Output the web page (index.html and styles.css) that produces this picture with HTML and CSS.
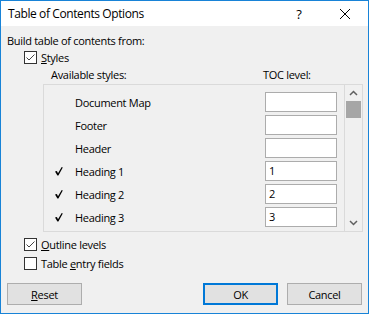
FILE: index.html
```html
<!DOCTYPE html>
<html>
<head>
<meta charset="utf-8">
<link rel="stylesheet" href="styles.css">
</head>
<body>
<div class="window">
  <div class="titlebar">
    <span class="title">Table of Contents Options</span>
    <span class="tbtn help">?</span>
    <span class="tbtn close"><svg width="10" height="10" viewBox="0 0 10 10"><path d="M0 0 L10 10 M10 0 L0 10" stroke="#000" stroke-width="1" fill="none"/></svg></span>
  </div>
  <div class="content">
    <div class="heading">Build table of contents from:</div>
    <div class="check-row">
      <span class="checkbox"><svg width="11" height="11" viewBox="0 0 11 11"><path d="M1.5 5.5 L4 8 L9.5 2.5" stroke="#444" stroke-width="1" fill="none"/></svg></span>
      <span class="label"><u>S</u>tyles</span>
    </div>
    <div class="cols-head">
      <span class="col-styles">Available styles:</span>
      <span class="col-level">TOC level:</span>
    </div>
    <div class="listbox">
      <div class="rows">
        <div class="row"><span class="mark"></span><span class="name">Document Map</span><span class="level"></span></div>
        <div class="row"><span class="mark"></span><span class="name">Footer</span><span class="level"></span></div>
        <div class="row"><span class="mark"></span><span class="name">Header</span><span class="level"></span></div>
        <div class="row"><span class="mark"><svg width="8" height="9" viewBox="0 0 8 9"><path d="M0 4.6 L1.9 3.9 L3 6.2 L6.7 0 L7.8 0.6 L3.4 8.6 L2.4 8.6 Z" fill="#000"/></svg></span><span class="name">Heading 1</span><span class="level">1</span></div>
        <div class="row"><span class="mark"><svg width="8" height="9" viewBox="0 0 8 9"><path d="M0 4.6 L1.9 3.9 L3 6.2 L6.7 0 L7.8 0.6 L3.4 8.6 L2.4 8.6 Z" fill="#000"/></svg></span><span class="name">Heading 2</span><span class="level">2</span></div>
        <div class="row"><span class="mark"><svg width="8" height="9" viewBox="0 0 8 9"><path d="M0 4.6 L1.9 3.9 L3 6.2 L6.7 0 L7.8 0.6 L3.4 8.6 L2.4 8.6 Z" fill="#000"/></svg></span><span class="name">Heading 3</span><span class="level">3</span></div>
      </div>
      <div class="scrollbar">
        <span class="arrow"><svg width="9" height="6" viewBox="0 0 9 6"><path d="M1 5 L4.5 1.5 L8 5" stroke="#606060" stroke-width="1.5" fill="none"/></svg></span>
        <span class="thumb"></span>
        <span class="track"></span>
        <span class="arrow"><svg width="9" height="6" viewBox="0 0 9 6"><path d="M1 1 L4.5 4.5 L8 1" stroke="#606060" stroke-width="1.5" fill="none"/></svg></span>
      </div>
    </div>
    <div class="check-row outline-row">
      <span class="checkbox"><svg width="11" height="11" viewBox="0 0 11 11"><path d="M1.5 5.5 L4 8 L9.5 2.5" stroke="#444" stroke-width="1" fill="none"/></svg></span>
      <span class="label"><u>O</u>utline levels</span>
    </div>
    <div class="check-row entry-row">
      <span class="checkbox"></span>
      <span class="label">Table <u>e</u>ntry fields</span>
    </div>
    <div class="buttons">
      <span class="btn"><u>R</u>eset</span>
      <span class="spacer"></span>
      <span class="btn default">OK</span>
      <span class="btn">Cancel</span>
    </div>
  </div>
</div>
</body>
</html>
```
FILE: styles.css
```css
* { box-sizing: border-box; }
html, body { margin: 0; padding: 0; }
body {
  font-family: "Open Sans", "Noto Sans", sans-serif;
  font-size: 11px;
  letter-spacing: -0.3px;
  color: #000;
  background: #f0f0f0;
}
.window {
  width: 369px;
  height: 314px;
  border: 1px solid #1883d7;
  background: #f0f0f0;
  display: flex;
  flex-direction: column;
}
.titlebar {
  height: 25px;
  background: #fff;
  display: flex;
  align-items: center;
  flex: none;
}
.title {
  flex: 1;
  padding-left: 7px;
  font-size: 12px;
  letter-spacing: -0.4px;
}
.tbtn {
  width: 46px;
  height: 25px;
  display: flex;
  align-items: center;
  justify-content: center;
}
.help { font-size: 13px; }
.content {
  flex: 1;
  display: flex;
  flex-direction: column;
}
.heading {
  margin: 7px 0 0 6px;
  line-height: 15px;
  height: 15px;
}
.check-row {
  display: flex;
  align-items: center;
  height: 13px;
  margin: 3px 0 0 23px;
}
.checkbox {
  width: 13px;
  height: 13px;
  border: 1px solid #333;
  background: #fff;
  display: flex;
  align-items: center;
  justify-content: center;
  flex: none;
}
.label {
  margin-left: 4px;
  line-height: 15px;
}
.cols-head {
  display: flex;
  margin: 3px 0 0 50px;
  line-height: 15px;
  height: 15px;
}
.col-styles { width: 212px; }
.listbox {
  margin: 2px 0 0 42px;
  width: 320px;
  height: 148px;
  border: 1px solid #dadada;
  display: flex;
}
.rows {
  flex: 1;
  padding: 7px 0 0 9px;
  display: flex;
  flex-direction: column;
  gap: 3px;
  border-right: 1px solid #dadada;
}
.row {
  display: flex;
  align-items: center;
  height: 20px;
}
.mark {
  width: 22px;
  display: flex;
  align-items: center;
  padding-left: 2px;
}
.name { flex: 1; }
.level {
  width: 72px;
  height: 20px;
  border: 1px solid #acacac;
  background: #fff;
  margin-right: 7px;
  padding-left: 3px;
  line-height: 18px;
}
.scrollbar {
  width: 17px;
  display: flex;
  flex-direction: column;
  align-items: center;
  background: #f0f0f0;
}
.arrow {
  height: 16px;
  display: flex;
  align-items: center;
  justify-content: center;
}
.thumb {
  width: 15px;
  height: 17px;
  background: #a6a6a6;
}
.track { flex: 1; }
.outline-row { margin-top: 6px; }
.entry-row { margin-top: 6px; }
.buttons {
  display: flex;
  margin-top: 13px;
  padding: 0 6px;
  gap: 9px;
}
.spacer { flex: 1; }
.btn {
  width: 75px;
  height: 22px;
  border: 1px solid #adadad;
  background: #e1e1e1;
  display: flex;
  align-items: center;
  justify-content: center;
}
.btn.default {
  border: 2px solid #0078d7;
}
```
